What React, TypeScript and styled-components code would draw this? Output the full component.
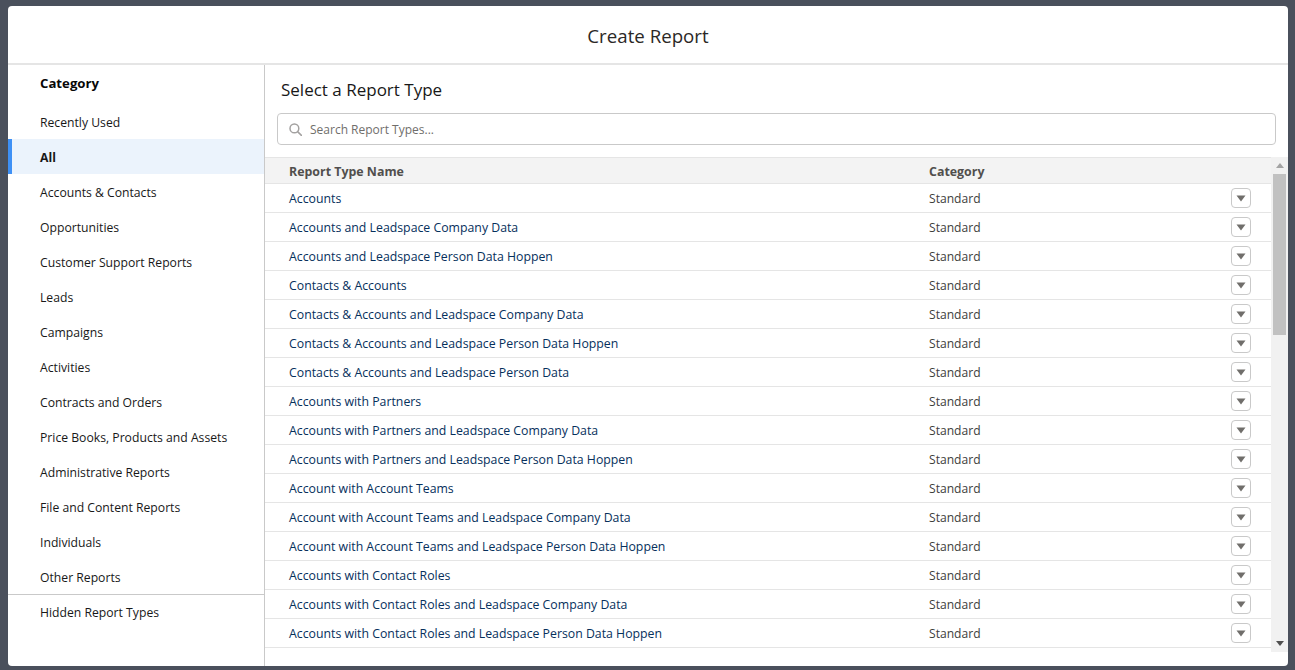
import React from "react";
import styled, { createGlobalStyle } from "styled-components";

const Global = createGlobalStyle`
  html, body { margin: 0; padding: 0; height: 100%; background: #4a505c; overflow: hidden; }
  body { font-family: "Open Sans", "Noto Sans", "Liberation Sans", sans-serif; font-size: 12.3px; color: #16325c; }
  * { box-sizing: border-box; }
`;

const Page = styled.div`
  width: 1295px;
  height: 670px;
  padding: 6px 7px 4px 8px;
`;
const Modal = styled.div`
  height: 660px;
  background: #fff;
  border-radius: 4px;
  display: flex;
  flex-direction: column;
  overflow: hidden;
`;
const Header = styled.header`
  height: 59px;
  flex: none;
  border-bottom: 2px solid #e5e5e5;
  display: flex;
  align-items: center;
  justify-content: center;
  font-size: 18.7px;
  color: #2b2826;
  padding-top: 2px;
`;
const Body = styled.div`
  flex: 1;
  display: flex;
  min-height: 0;
`;
const Sidebar = styled.nav`
  width: 257px;
  flex: none;
  border-right: 1px solid #c9c9c9;
  display: flex;
  flex-direction: column;
`;
const SideTitle = styled.div`
  height: 39px;
  padding: 9px 0 0 32px;
  font-size: 13.2px;
  font-weight: 700;
  color: #080707;
  line-height: 18px;
`;
const SideList = styled.div`
  border-bottom: 1px solid #c9c9c9;
`;
const SideItem = styled.div<{ $active?: boolean }>`
  height: 35px;
  display: flex;
  align-items: center;
  padding: 2px 0 0 ${(p) => (p.$active ? 28 : 32)}px;
  border-left: ${(p) => (p.$active ? "4px solid #3e90f5" : "0")};
  background: ${(p) => (p.$active ? "#ebf3fc" : "transparent")};
  font-size: 12.2px;
  font-weight: ${(p) => (p.$active ? 700 : 400)};
  color: #181818;
`;
const HiddenItem = styled(SideItem)`
  padding-top: 0;
`;
const Main = styled.main`
  flex: 1;
  min-width: 0;
  display: flex;
  flex-direction: column;
`;
const MainTitle = styled.h2`
  margin: 0;
  height: 48px;
  padding: 12px 0 0 16px;
  font-size: 17px;
  font-weight: 400;
  line-height: 26px;
  color: #181818;
`;
const SearchBox = styled.div`
  height: 32px;
  margin: 0 12px;
  border: 1px solid #c9c9c9;
  border-radius: 4px;
  display: flex;
  align-items: center;
  gap: 8px;
  padding-left: 11px;
  color: #706e6b;
  font-size: 12px;
  flex: none;
`;
const TableArea = styled.div`
  display: flex;
  margin-top: 12px;
  height: 495px;
  flex: none;
`;
const Table = styled.div`
  flex: 1;
  min-width: 0;
`;
const HeadRow = styled.div`
  height: 27px;
  background: #f3f3f3;
  border-top: 1px solid #e5e5e5;
  border-bottom: 1px solid #e5e5e5;
  display: grid;
  grid-template-columns: 640px 1fr;
  align-items: center;
  padding: 1px 0 0 24px;
  font-size: 12.4px;
  font-weight: 700;
  color: #514f4d;
`;
const Row = styled.div`
  height: 29px;
  border-bottom: 1px solid #e5e5e5;
  display: grid;
  grid-template-columns: 640px 1fr 20px;
  align-items: center;
  padding: 0 20px 0 24px;
`;
const NameLink = styled.a`
  color: #06305c;
`;
const CategoryCell = styled.span`
  color: #3e3e3c;
  font-size: 12.1px;
`;
const MenuButton = styled.span`
  width: 20px;
  height: 20px;
  border: 1px solid #c9c9c9;
  border-radius: 4px;
  display: flex;
  align-items: center;
  justify-content: center;
  background: #fff;
`;
const Scrollbar = styled.div`
  width: 17px;
  flex: none;
  background: #f1f1f1;
  display: flex;
  flex-direction: column;
  align-items: center;
`;
const ArrowCell = styled.div<{ $push?: boolean }>`
  height: 17px;
  display: flex;
  align-items: center;
  justify-content: center;
  margin-top: ${(p) => (p.$push ? "auto" : "0")};
`;
const Thumb = styled.div`
  width: 13px;
  height: 161px;
  background: #c1c1c1;
`;

const Caret = () => (
  <svg width="10" height="7" viewBox="0 0 10 7"><path d="M0.5 0.5h9L5 6.5z" fill="#706e6b" /></svg>
);
const ScrollArrow = ({ up, color }: { up?: boolean; color: string }) => (
  <svg width="8" height="5" viewBox="0 0 8 5"><path d={up ? "M4 0l4 5H0z" : "M0 0h8L4 5z"} fill={color} /></svg>
);
const SearchIcon = () => (
  <svg width="13" height="13" viewBox="0 0 13 13" fill="none" stroke="#a3a1a0" strokeWidth="1.5">
    <circle cx="5.4" cy="5.4" r="4.4" />
    <path d="M8.6 8.6l3.8 3.8" strokeLinecap="round" />
  </svg>
);

const categories = [
  "Recently Used", "All", "Accounts & Contacts", "Opportunities", "Customer Support Reports", "Leads",
  "Campaigns", "Activities", "Contracts and Orders", "Price Books, Products and Assets",
  "Administrative Reports", "File and Content Reports", "Individuals", "Other Reports",
];
const reports = [
  "Accounts", "Accounts and Leadspace Company Data", "Accounts and Leadspace Person Data Hoppen",
  "Contacts & Accounts", "Contacts & Accounts and Leadspace Company Data",
  "Contacts & Accounts and Leadspace Person Data Hoppen", "Contacts & Accounts and Leadspace Person Data",
  "Accounts with Partners", "Accounts with Partners and Leadspace Company Data",
  "Accounts with Partners and Leadspace Person Data Hoppen", "Account with Account Teams",
  "Account with Account Teams and Leadspace Company Data", "Account with Account Teams and Leadspace Person Data Hoppen",
  "Accounts with Contact Roles", "Accounts with Contact Roles and Leadspace Company Data",
  "Accounts with Contact Roles and Leadspace Person Data Hoppen",
];

export default function App() {
  return (
    <Page>
      <Global />
      <Modal>
        <Header>Create Report</Header>
        <Body>
          <Sidebar>
            <SideTitle>Category</SideTitle>
            <SideList>
              {categories.map((c) => (
                <SideItem key={c} $active={c === "All"}>{c}</SideItem>
              ))}
            </SideList>
            <HiddenItem>Hidden Report Types</HiddenItem>
          </Sidebar>
          <Main>
            <MainTitle>Select a Report Type</MainTitle>
            <SearchBox><SearchIcon />Search Report Types...</SearchBox>
            <TableArea>
              <Table>
                <HeadRow><span>Report Type Name</span><span>Category</span></HeadRow>
                {reports.map((r) => (
                  <Row key={r}>
                    <NameLink>{r}</NameLink>
                    <CategoryCell>Standard</CategoryCell>
                    <MenuButton><Caret /></MenuButton>
                  </Row>
                ))}
              </Table>
              <Scrollbar>
                <ArrowCell><ScrollArrow up color="#a3a3a3" /></ArrowCell>
                <Thumb />
                <ArrowCell $push><ScrollArrow color="#505050" /></ArrowCell>
              </Scrollbar>
            </TableArea>
          </Main>
        </Body>
      </Modal>
    </Page>
  );
}
